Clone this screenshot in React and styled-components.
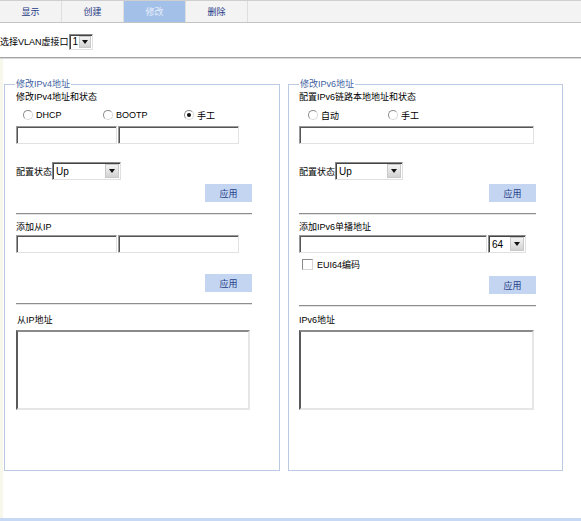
import React from "react";
import styled, { createGlobalStyle } from "styled-components";

const GlobalStyle = createGlobalStyle`
  body {
    margin: 0;
    background: #fff;
    font-family: "Liberation Sans", "Noto Sans CJK SC", sans-serif;
    font-size: 9px;
    color: #000;
  }
`;

const Page = styled.div`
  width: 581px;
  height: 521px;
  display: flex;
  flex-direction: column;
  overflow: hidden;
`;

const TabBar = styled.div`
  height: 21px;
  display: flex;
  background: #f3f3f3;
  border-top: 1px solid #cfcfcf;
  border-bottom: 1px solid #c4c4c4;
`;

const Tab = styled.div`
  width: 61px;
  display: flex;
  align-items: center;
  justify-content: center;
  border-right: 1px solid #dedede;
  background: ${p => (p.$active ? "#a3c0e8" : "transparent")};
  color: ${p => (p.$active ? "#e6eefb" : "#1f3a86")};
`;

const VlanRow = styled.div`
  margin-top: 11px;
  height: 15px;
  display: flex;
  align-items: center;
`;

const TopRule = styled.div`
  margin-top: 8px;
  height: 0;
  border-top: 1px solid #a4a4a4;
  border-bottom: 1px solid #dadada;
`;

const Main = styled.div`
  flex: 1;
  display: flex;
  flex-direction: column;
  border-left: 3px solid #f8f7ec;
`;

const Panels = styled.div`
  margin-top: 18px;
  display: flex;
  gap: 8px;
  padding-left: 1px;
`;

const Fieldset = styled.fieldset`
  margin: 0;
  min-width: 0;
  box-sizing: border-box;
  width: ${p => p.$w}px;
  height: 394px;
  border: 1px solid #bccbe3;
  padding: 0 ${p => p.$pr}px 0 ${p => p.$pl}px;
`;

const Legend = styled.legend`
  padding: 0 1px;
  margin-left: ${p => p.$ml}px;
  height: 14px;
  line-height: 14px;
  color: #3f5f9f;
`;

const Line = styled.div`
  margin-top: ${p => p.$mt || 0}px;
  padding-left: ${p => p.$pl || 0}px;
  height: 13px;
  line-height: 13px;
  white-space: nowrap;
`;

const Row = styled.div`
  margin-top: ${p => p.$mt || 0}px;
  padding-left: ${p => p.$pl || 0}px;
  height: ${p => p.$h || 18}px;
  display: flex;
  align-items: center;
  gap: ${p => p.$gap || 0}px;
  justify-content: ${p => (p.$end ? "flex-end" : "flex-start")};
  white-space: nowrap;
`;

const RadioItem = styled.label`
  width: ${p => p.$w}px;
  display: flex;
  align-items: center;
`;

const Radio = styled.span`
  width: 8px;
  height: 8px;
  border-radius: 50%;
  border: 1px solid #8c8c8c;
  border-right-color: #d8d8d8;
  border-bottom-color: #d8d8d8;
  margin-right: 3px;
  display: flex;
  align-items: center;
  justify-content: center;
  &::after {
    content: "";
    width: 4px;
    height: 4px;
    border-radius: 50%;
    background: ${p => (p.$on ? "#111" : "transparent")};
  }
`;

const Check = styled.span`
  width: 9px;
  height: 9px;
  border: 1px solid #8a8a8a;
  border-right-color: #d6d6d6;
  border-bottom-color: #d6d6d6;
  margin-right: 4px;
`;

const TextBox = styled.div`
  box-sizing: border-box;
  width: ${p => p.$w}px;
  height: 18px;
  background: #fff;
  border: 1px solid #e2e2e2;
  border-top-color: #9a9a9a;
  border-left-color: #9a9a9a;
  box-shadow: inset 1px 1px 0 #555;
`;

const SelectBox = styled.div`
  box-sizing: border-box;
  width: ${p => p.$w}px;
  height: ${p => p.$h || 18}px;
  display: flex;
  align-items: stretch;
  background: #fff;
  border: 1px solid #e0e0e0;
  border-top-color: #8a8a8a;
  border-left-color: #8a8a8a;
  box-shadow: inset 1px 1px 0 #444;
`;

const SelectValue = styled.span`
  flex: 1;
  padding-left: 3px;
  display: flex;
  align-items: center;
  font-size: 10px;
`;

const SelectArrow = styled.span`
  width: 14px;
  margin: 1px;
  background: linear-gradient(#f4f4f4, #d2d2d2);
  border: 1px solid #c8c8c8;
  box-sizing: border-box;
  display: flex;
  align-items: center;
  justify-content: center;
  &::after {
    content: "";
    border-left: 3px solid transparent;
    border-right: 3px solid transparent;
    border-top: 4px solid #111;
  }
`;

const ApplyButton = styled.div`
  width: 47px;
  height: 18px;
  background: #c4d5f1;
  color: #24408a;
  display: flex;
  align-items: center;
  justify-content: center;
`;

const Divider = styled.div`
  margin-top: ${p => p.$mt}px;
  height: 0;
  border-top: 1px solid #8e8e8e;
  border-bottom: 1px solid #e4e4e4;
`;

const ListBox = styled.div`
  margin-top: 3px;
  box-sizing: border-box;
  width: ${p => p.$w}px;
  height: 80px;
  background: #fff;
  border: 2px solid #e6e6e6;
  border-top-color: #8a8a8a;
  border-left-color: #5a5a5a;
`;

const Footer = styled.div`
  height: 3px;
  background: #c6d8f3;
`;

const Select = ({ w, h, value }) => (
  <SelectBox $w={w} $h={h}>
    <SelectValue>{value}</SelectValue>
    <SelectArrow />
  </SelectBox>
);

const tabs = ["显示", "创建", "修改", "删除"];

export default function App() {
  return (
    <Page>
      <GlobalStyle />
      <TabBar>
        {tabs.map(t => (
          <Tab key={t} $active={t === "修改"}>
            {t}
          </Tab>
        ))}
      </TabBar>
      <VlanRow>
        选择VLAN虚接口
        <Select w={24} h={16} value="1" />
      </VlanRow>
      <TopRule />
      <Main>
        <Panels>
          <Fieldset $w={276} $pl={11} $pr={27}>
            <Legend $ml={-1}>修改IPv4地址</Legend>
            <Line>修改IPv4地址和状态</Line>
            <Row $mt={3} $h={16} $pl={7}>
              <RadioItem $w={80}>
                <Radio />
                DHCP
              </RadioItem>
              <RadioItem $w={81}>
                <Radio />
                BOOTP
              </RadioItem>
              <RadioItem $w={60}>
                <Radio $on />
                手工
              </RadioItem>
            </Row>
            <Row $mt={3} $gap={1}>
              <TextBox $w={101} />
              <TextBox $w={121} />
            </Row>
            <Row $mt={18}>
              配置状态
              <Select w={69} value="Up" />
            </Row>
            <Row $mt={4} $end>
              <ApplyButton>应用</ApplyButton>
            </Row>
            <Divider $mt={11} />
            <Line $mt={6}>添加从IP</Line>
            <Row $mt={1} $gap={1}>
              <TextBox $w={101} />
              <TextBox $w={121} />
            </Row>
            <Row $mt={21} $end>
              <ApplyButton>应用</ApplyButton>
            </Row>
            <Divider $mt={11} />
            <Line $mt={9} $pl={1}>
              从IP地址
            </Line>
            <ListBox $w={234} />
          </Fieldset>
          <Fieldset $w={275} $pl={10} $pr={26}>
            <Legend $ml={0}>修改IPv6地址</Legend>
            <Line>配置IPv6链路本地地址和状态</Line>
            <Row $mt={3} $h={16} $pl={9}>
              <RadioItem $w={80}>
                <Radio />
                自动
              </RadioItem>
              <RadioItem $w={60}>
                <Radio />
                手工
              </RadioItem>
            </Row>
            <Row $mt={3}>
              <TextBox $w={235} />
            </Row>
            <Row $mt={18}>
              配置状态
              <Select w={68} value="Up" />
            </Row>
            <Row $mt={4} $end>
              <ApplyButton>应用</ApplyButton>
            </Row>
            <Divider $mt={11} />
            <Line $mt={6}>添加IPv6单播地址</Line>
            <Row $mt={1} $gap={1}>
              <TextBox $w={188} />
              <Select w={38} value="64" />
            </Row>
            <Row $mt={4} $h={14} $pl={3}>
              <Check />
              EUI64编码
            </Row>
            <Row $mt={5} $end>
              <ApplyButton>应用</ApplyButton>
            </Row>
            <Divider $mt={11} />
            <Line $mt={7}>IPv6地址</Line>
            <ListBox $w={235} />
          </Fieldset>
        </Panels>
      </Main>
      <Footer />
    </Page>
  );
}
